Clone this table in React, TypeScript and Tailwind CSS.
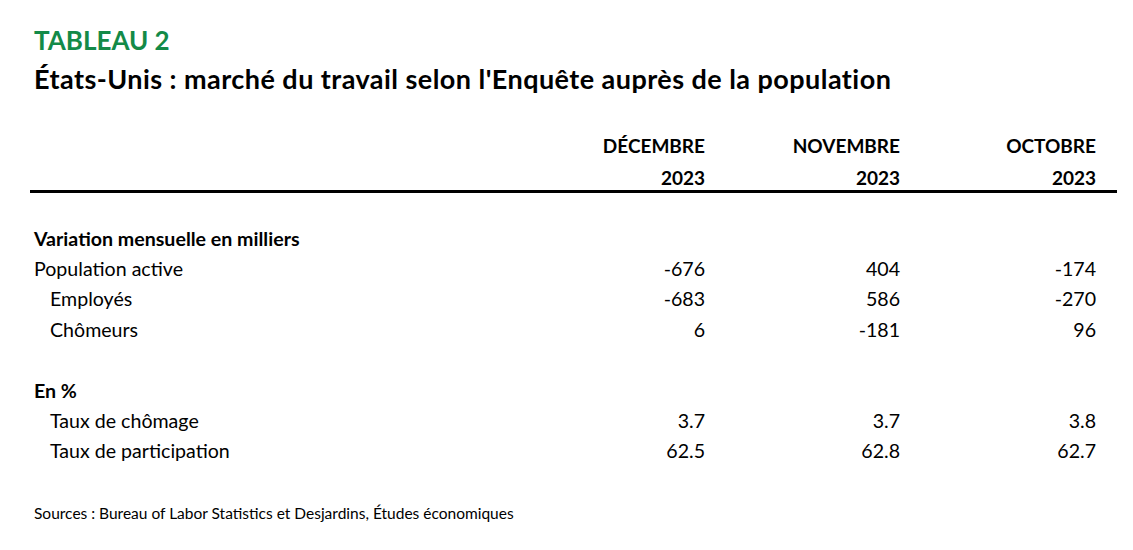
export default function App() {
  const rows: { label: string; vals?: string[]; bold?: boolean; indent?: boolean }[] = [
    { label: "Variation mensuelle en milliers", bold: true },
    { label: "Population active", vals: ["-676", "404", "-174"] },
    { label: "Employés", vals: ["-683", "586", "-270"], indent: true },
    { label: "Chômeurs", vals: ["6", "-181", "96"], indent: true },
    { label: "" },
    { label: "En %", bold: true },
    { label: "Taux de chômage", vals: ["3.7", "3.7", "3.8"], indent: true },
    { label: "Taux de participation", vals: ["62.5", "62.8", "62.7"], indent: true },
  ];
  return (
    <div className="w-[1133px] h-[550px] bg-white text-black font-['Lato',sans-serif]">
      <div className="pl-[34px] pt-[26px]">
        <div className="text-[26px] leading-[28px] font-bold text-[#138a48]">TABLEAU 2</div>
        <div className="text-[27px] leading-[28px] font-bold tracking-[0.45px] mt-[11px]">
          États-Unis : marché du travail selon l'Enquête auprès de la population
        </div>
      </div>
      <div className="mt-[37px] pl-[34px] grid grid-cols-[476px_195px_195px_196px] grid-rows-[32px_28px] text-[19px] font-bold leading-[32px]">
        <div />
        <div className="text-right">DÉCEMBRE</div>
        <div className="text-right">NOVEMBRE</div>
        <div className="text-right">OCTOBRE</div>
        <div />
        <div className="text-right">2023</div>
        <div className="text-right">2023</div>
        <div className="text-right">2023</div>
      </div>
      <div className="ml-[30px] w-[1087px] h-[3px] bg-black" />
      <div className="mt-[30.5px] pl-[34px] grid grid-cols-[476px_195px_195px_196px] text-[19.6px] leading-[30.4px]">
        {rows.map((r, i) => (
          <div key={i} className="contents">
            <div className={`${r.bold ? "font-bold" : ""} ${r.indent ? "pl-[16px]" : ""} h-[30.4px]`}>{r.label}</div>
            <div className="text-right">{r.vals ? r.vals[0] : ""}</div>
            <div className="text-right">{r.vals ? r.vals[1] : ""}</div>
            <div className="text-right">{r.vals ? r.vals[2] : ""}</div>
          </div>
        ))}
      </div>
      <div className="pl-[34px] mt-[37px] text-[15.5px] leading-[18px]">
        Sources : Bureau of Labor Statistics et Desjardins, Études économiques
      </div>
    </div>
  );
}
